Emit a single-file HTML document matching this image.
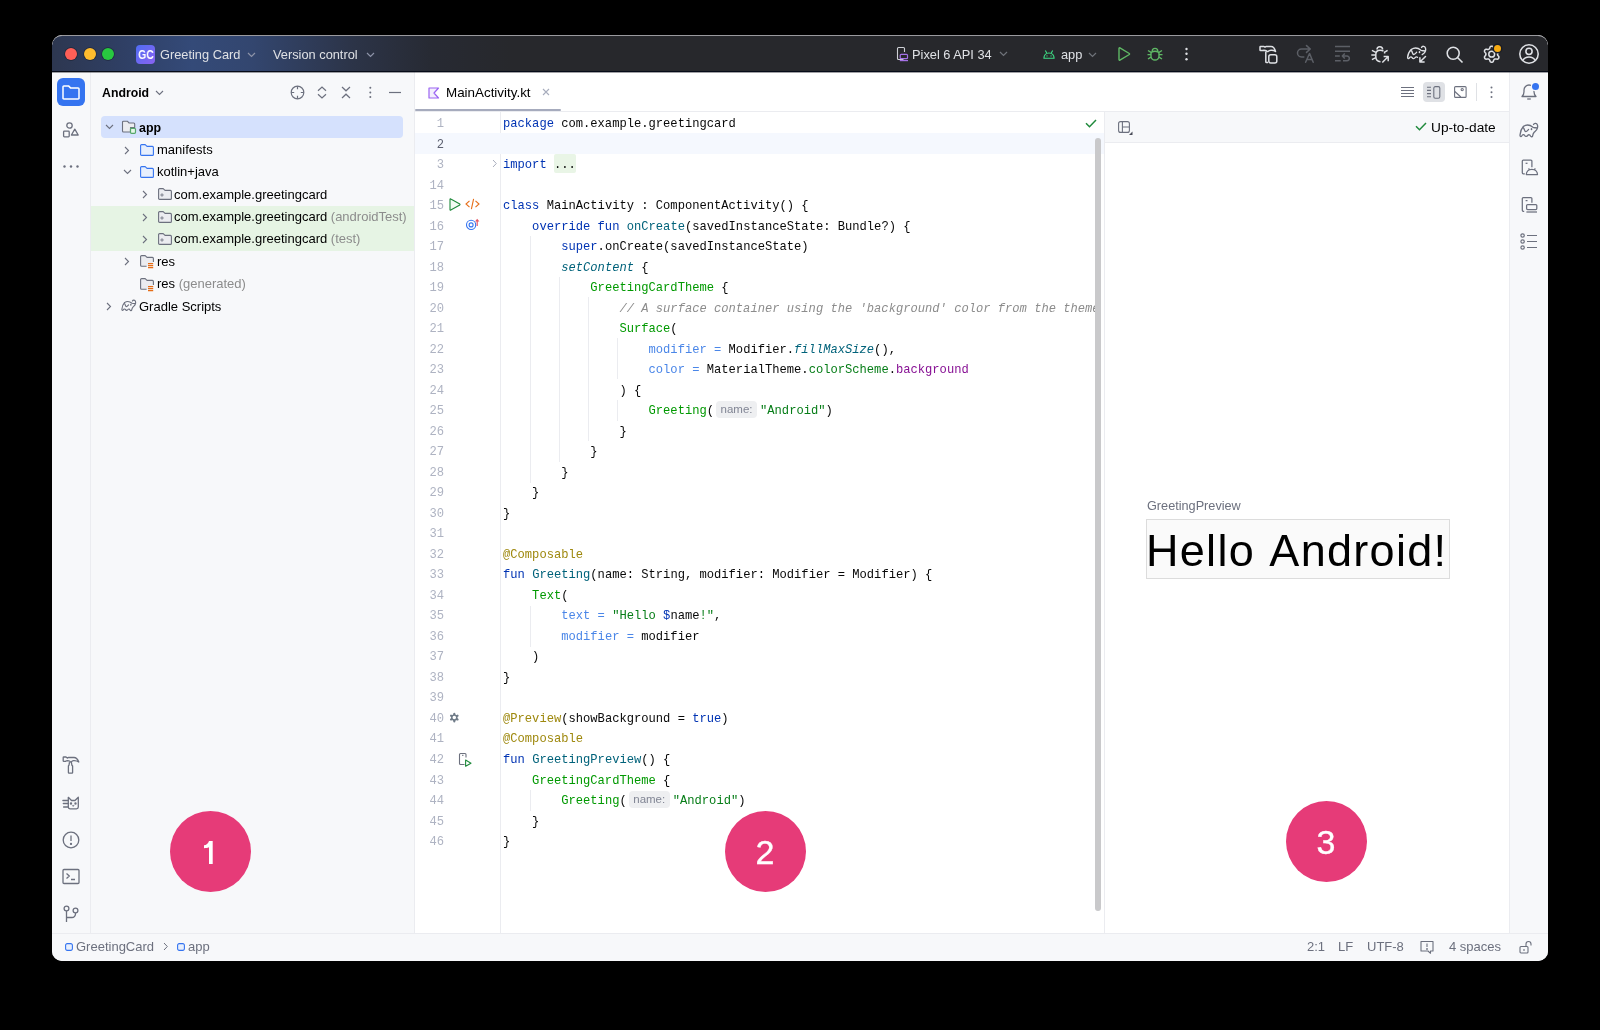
<!DOCTYPE html>
<html><head><meta charset="utf-8">
<style>
*{margin:0;padding:0;box-sizing:border-box}
html,body{width:1600px;height:1030px;background:#000;overflow:hidden;font-family:"Liberation Sans",sans-serif;color:#000}
#win{position:absolute;left:0;top:0;width:1600px;height:1030px;clip-path:inset(35px 52px 69px 52px round 10px);background:#f7f8fa}
.a{position:absolute}
div.a{will-change:transform}
svg{position:absolute;overflow:visible}
/* title bar */
#tb{left:52px;top:35px;width:1496px;height:37px;background:linear-gradient(90deg,#2d3750 0px,#2f3f64 70px,#344a78 140px,#33466f 200px,#2c3448 300px,#272a33 380px,#27282c 460px);border-top:1px solid #9a9a9e;border-bottom:1px solid #060b18;border-radius:10px 10px 0 0}
#tbg{display:none}
.tl{width:12px;height:12px;border-radius:50%;top:48px;box-shadow:0 0 0 .7px rgba(0,0,0,.35)}
.tt{color:#dfe1e5;font-size:12.8px;top:46.8px;line-height:16px;white-space:nowrap}
/* panels */
#strip{left:52px;top:72px;width:39px;height:861px;background:#f7f8fa;border-right:1px solid #ebecf0}
#proj{left:91px;top:72px;width:324px;height:861px;background:#f7f8fa;border-right:1px solid #ebecf0}
#edh{left:415px;top:72px;width:1095px;height:40px;background:#fff;border-bottom:1px solid #ebecf0}
#ed{left:415px;top:112px;width:689px;height:821px;background:#fff}
#gut{left:500px;top:112px;width:1px;height:821px;background:#ebecf0}
#split{left:1104px;top:112px;width:1px;height:821px;background:#ebecf0}
#pvh{left:1105px;top:112px;width:405px;height:31px;background:#f7f8fa;border-bottom:1px solid #ebecf0}
#pv{left:1105px;top:143px;width:405px;height:790px;background:#fff}
#rstrip{left:1509px;top:72px;width:39px;height:861px;background:#f7f8fa;border-left:1px solid #ebecf0}
#sb{left:52px;top:933px;width:1496px;height:28px;background:#f7f8fa;border-top:1px solid #ebecf0}
/* tree */
.tr{font-size:13px;line-height:16px;white-space:nowrap;color:#000}
.gr{color:#8c8c8c}
/* code */
#code{left:503px;top:113.8px;font-family:"Liberation Mono",monospace;font-size:12.13px;line-height:20.52px;white-space:pre;color:#080808}
#nums{left:415px;top:113.8px;width:29px;text-align:right;font-family:"Liberation Mono",monospace;font-size:12.13px;line-height:20.52px;white-space:pre;color:#aeb3c2}
.k{color:#0033b3}.s{color:#067d17}.f{color:#00627a}.fi{color:#00627a;font-style:italic}
.c{color:#8c8c8c;font-style:italic}.an{color:#9e880d}.na{color:#4a86e8}.cp{color:#009900}.pu{color:#871094}
.hint{display:inline-block;width:41px;height:16.5px;margin:0 3px 0 2px;background:#eeeff1;border-radius:4px;color:#818594;font-family:"Liberation Sans",sans-serif;font-size:11.5px;line-height:16.5px;text-align:center;vertical-align:1px}
.ig{width:1px;background:#ebecf0}
.circ{width:81px;height:81px;border-radius:50%;background:#e63b78;color:#fff;font-size:34px;text-align:center;line-height:83.5px;-webkit-text-stroke:.35px #fff;text-indent:-1px}
.st{font-size:13px;line-height:16px;color:#6c707e;top:939px;white-space:nowrap}
</style></head>
<body>
<div id="win">
  <!-- TITLE BAR -->
  <div id="tb" class="a"></div>
  <div id="tbg" class="a"></div>
  <div class="a tl" style="left:65px;background:#ff5f57"></div>
  <div class="a tl" style="left:83.5px;background:#febc2e"></div>
  <div class="a tl" style="left:102px;background:#28c840"></div>
  <div class="a" style="left:136px;top:44.5px;width:19px;height:19px;border-radius:4px;background:linear-gradient(135deg,#4f6df5,#8a63f0)"></div><div class="a" style="left:136px;top:44.5px;width:19px;height:19px;color:#fff;font-size:13.4px;font-weight:bold;line-height:20px;text-align:center;transform:scaleX(.78)">GC</div>
  <div class="a tt" style="left:160px">Greeting Card</div>
  <div class="a tt" style="left:273px">Version control</div>
  <div class="a tt" style="left:912px">Pixel 6 API 34</div>
  <div class="a tt" style="left:1061px">app</div>


  <!-- TITLE ICONS -->
  <svg style="left:246.5px;top:51.5px" width="9" height="6" viewBox="0 0 9 6"><path d="M1 1l3.5 3.5L8 1" fill="none" stroke="#8d93a8" stroke-width="1.2"/></svg>
  <svg style="left:366px;top:51.5px" width="9" height="6" viewBox="0 0 9 6"><path d="M1 1l3.5 3.5L8 1" fill="none" stroke="#8d93a8" stroke-width="1.2"/></svg>
  <svg style="left:999px;top:51px" width="9" height="6" viewBox="0 0 9 6"><path d="M1 1l3.5 3.5L8 1" fill="none" stroke="#6f737a" stroke-width="1.2"/></svg>
  <svg style="left:1088px;top:52px" width="9" height="6" viewBox="0 0 9 6"><path d="M1 1l3.5 3.5L8 1" fill="none" stroke="#6f737a" stroke-width="1.2"/></svg>
  <!-- device icon -->
  <svg style="left:896px;top:47px" width="13" height="15" viewBox="0 0 13 15"><path d="M7.5 12.5H2.5a1 1 0 0 1-1-1V1.5a1 1 0 0 1 1-1h5a1 1 0 0 1 1 1V5" fill="none" stroke="#ced0d6" stroke-width="1.1"/><rect x="4.2" y="7.3" width="7.3" height="4.4" rx="1" fill="none" stroke="#a571e6" stroke-width="1.2"/><path d="M3.8 13.6h8.2" stroke="#a571e6" stroke-width="1.2"/></svg>
  <!-- android head -->
  <svg style="left:1042.5px;top:49.5px" width="12" height="9" viewBox="0 0.5 13 10.5" preserveAspectRatio="none"><path d="M1 10.2C1 6.5 3.4 4 6.5 4S12 6.5 12 10.2Z" fill="none" stroke="#3ddc84" stroke-width="1.3" stroke-linejoin="round"/><path d="M2.5 1l1.6 3M10.5 1L8.9 4" stroke="#3ddc84" stroke-width="1.2"/><circle cx="4.3" cy="7.4" r=".7" fill="#3ddc84"/><circle cx="8.7" cy="7.4" r=".7" fill="#3ddc84"/></svg>
  <!-- run -->
  <svg style="left:1117px;top:47px" width="14" height="14" viewBox="0 0 14 14"><path d="M2 1.4v11.2a.6.6 0 0 0 .9.5l9.4-5.6a.6.6 0 0 0 0-1L2.9.9A.6.6 0 0 0 2 1.4Z" fill="none" stroke="#5fb865" stroke-width="1.4" stroke-linejoin="round"/></svg>
  <!-- debug bug -->
  <svg style="left:1147px;top:47px" width="16" height="14" viewBox="0 0 16 14"><path d="M5.2 4.2a2.8 2.8 0 0 1 5.6 0" fill="none" stroke="#5fb865" stroke-width="1.4"/><path d="M4 6.5C4 4.9 5.5 4.2 8 4.2s4 .7 4 2.3v2.7c0 2.2-1.8 3.8-4 3.8s-4-1.6-4-3.8Z" fill="none" stroke="#5fb865" stroke-width="1.4"/><path d="M.5 7.6H4M12 7.6h3.5M1 3.5l3 1.8M15 3.5l-3 1.8M1 12l3-1.8M15 12l-3-1.8" stroke="#5fb865" stroke-width="1.4"/></svg>
  <!-- vertical dots -->
  <svg style="left:1184px;top:47px" width="5" height="14" viewBox="0 0 5 14"><circle cx="2.5" cy="2" r="1.2" fill="#dfe1e5"/><circle cx="2.5" cy="6.8" r="1.2" fill="#dfe1e5"/><circle cx="2.5" cy="12.3" r="1.2" fill="#dfe1e5"/></svg>
  <!-- hammer build -->
  <svg style="left:1254px;top:42px" width="28" height="24" viewBox="0 0 28 24" fill="none" stroke="#dfe1e5" stroke-width="1.5" stroke-linejoin="round"><path d="M6.5 4.5H10l1 .7 1-.7h5c2 0 3.8 2 4.5 5-1.3-1-2.9-1.3-4.5-1.2-1.5.1-2.5.7-3 1.2h-1c-.5-.7-1.5-1.3-3-1.3l-1.5.3h-2q-.5 0-.5-.5V5q0-.5.5-.5Z"/><path d="M11.8 9.5v10.3q0 .8.8.8H14"/><rect x="14.8" y="12.8" width="8" height="8.2" rx="2"/></svg>
  <!-- redo A -->
  <svg style="left:1291px;top:42px" width="28" height="24" viewBox="0 0 28 24" fill="none" stroke="#5c5f66" stroke-width="1.5" stroke-linejoin="round" stroke-linecap="round"><path d="M12.8 15h-2.3a4 4 0 0 1 0-8h8.8M15.5 3.6L19.3 7l-3.8 3.4"/><path d="M14.6 20.3l3.9-8.8h.1l3.6 8.8M15.8 17.6H21"/></svg>
  <!-- lines wrap -->
  <svg style="left:1329px;top:42px" width="28" height="24" viewBox="0 0 28 24" fill="none" stroke="#5c5f66" stroke-width="1.5" stroke-linejoin="round"><path d="M6 4.6h15M6 9.3h15M6 14h4.8M6 18.7h5.7"/><path d="M13.6 14H18a2.35 2.35 0 0 1 0 4.7h-4M15.8 11.4L13.3 14l2.5 2.6"/></svg>
  <!-- bug arrow -->
  <svg style="left:1366px;top:42px" width="28" height="24" viewBox="0 0 28 24" fill="none" stroke="#dfe1e5" stroke-width="1.5" stroke-linejoin="round"><path d="M11 7.6a2.8 2.8 0 0 1 5.6 0"/><path d="M17.5 9.3c-.8-.7-2-1-3.5-1-2.6 0-4.2 1.2-4.2 4.3v2.2c0 2.9 1.8 4.7 4.7 4.9"/><path d="M5.9 8.4l3.9 2M5.3 13h4.5M5.9 17.6l3.9-1.9M21.6 8.4l-3 1.8v1.2"/><path d="M16.3 20.5l5.7-5.7M17.6 14.6h4.6v4.6"/></svg>
  <!-- gradle sync -->
  <svg style="left:1403px;top:42px" width="28" height="24" viewBox="0 0 28 24" fill="none" stroke="#dfe1e5" stroke-width="1.35" stroke-linejoin="round" stroke-linecap="round"><path d="M8.3 7.5C11 5.6 15 5.8 18 8.3c1.5.5 3 .5 4.5.5.5-1.8 0-4.3-2-4.5-1-.1-1.7.5-2 1.2M22.5 8.8c-.4 1.8-1.8 3-3.3 3.8"/><path d="M14.5 15.3c-.8-.6-1.7-.5-2.4.4-.8 1.1-2.2 1.3-3-.1-.7-1-2-1-2.7.3-.7 1-1.9.8-1.8-.6.2-2.8 1.2-5.5 3.7-7.8"/><path d="M8.5 8.8c1 1.2 1 3.7 2.2 3.7 1.1 0 2.1-1.3 2.9-2.2"/><path d="M16.5 9.9v.6" stroke-width="1.6"/><path d="M22.5 14.5L17.2 19.8M16.9 15.8v4.3h4.2" stroke-width="1.5"/></svg>
  <!-- search -->
  <svg style="left:1446px;top:46px" width="18" height="17" viewBox="0 0 18 17" fill="none" stroke="#dfe1e5" stroke-width="1.55"><circle cx="7.2" cy="7.2" r="6"/><path d="M11.5 11.5l5 5"/></svg>
  <!-- gear -->
  <svg style="left:1478px;top:42px" width="28" height="24" viewBox="0 0 28 24" fill="none" stroke="#dfe1e5" stroke-width="1.5" stroke-linejoin="round"><path d="M19.45 12.20 L19.48 12.50 L19.56 12.82 L19.69 13.15 L19.89 13.52 L20.36 13.99 L20.80 14.51 L20.92 14.97 L20.93 15.42 L20.84 15.84 L20.67 16.22 L20.42 16.57 L20.10 16.85 L19.71 17.07 L19.25 17.20 L18.58 17.08 L17.94 16.91 L17.52 16.91 L17.16 16.96 L16.85 17.05 L16.57 17.18 L16.33 17.35 L16.09 17.58 L15.87 17.86 L15.66 18.22 L15.49 18.86 L15.25 19.51 L14.91 19.84 L14.53 20.07 L14.12 20.20 L13.70 20.25 L13.28 20.20 L12.87 20.07 L12.49 19.84 L12.15 19.51 L11.91 18.86 L11.74 18.22 L11.53 17.86 L11.31 17.58 L11.07 17.35 L10.83 17.18 L10.55 17.05 L10.24 16.96 L9.88 16.91 L9.46 16.91 L8.82 17.08 L8.15 17.20 L7.69 17.07 L7.30 16.85 L6.98 16.57 L6.73 16.22 L6.56 15.84 L6.47 15.42 L6.48 14.97 L6.60 14.51 L7.04 13.99 L7.51 13.52 L7.71 13.15 L7.84 12.82 L7.92 12.50 L7.95 12.20 L7.92 11.90 L7.84 11.58 L7.71 11.25 L7.51 10.88 L7.04 10.41 L6.60 9.89 L6.48 9.43 L6.47 8.98 L6.56 8.56 L6.73 8.18 L6.98 7.83 L7.30 7.55 L7.69 7.33 L8.15 7.20 L8.82 7.32 L9.46 7.49 L9.88 7.49 L10.24 7.44 L10.55 7.35 L10.82 7.22 L11.07 7.05 L11.31 6.82 L11.53 6.54 L11.74 6.18 L11.91 5.54 L12.15 4.89 L12.49 4.56 L12.87 4.33 L13.28 4.20 L13.70 4.15 L14.12 4.20 L14.53 4.33 L14.91 4.56 L15.25 4.89 L15.49 5.54 L15.66 6.18 L15.87 6.54 L16.09 6.82 L16.33 7.05 L16.57 7.22 L16.85 7.35 L17.16 7.44 L17.52 7.49 L17.94 7.49 L18.58 7.32 L19.25 7.20 L19.71 7.33 L20.10 7.55 L20.42 7.83 L20.67 8.18 L20.84 8.56 L20.93 8.98 L20.92 9.43 L20.80 9.89 L20.36 10.41 L19.89 10.88 L19.69 11.25 L19.56 11.58 L19.48 11.90Z"/><circle cx="13.7" cy="12.2" r="2.9"/></svg>
  <div class="a" style="left:1494.3px;top:44.5px;width:7px;height:7px;border-radius:50%;background:#f7ab12;box-shadow:0 0 0 1.5px #1a1d26"></div>
  <!-- profile -->
  <svg style="left:1519.3px;top:43.7px" width="20" height="20" viewBox="0 0 20 20" fill="none" stroke="#dfe1e5" stroke-width="1.55"><circle cx="10" cy="10" r="9.2"/><circle cx="10" cy="7.3" r="3.1"/><path d="M3.6 16.6c1.4-2.3 3.6-3.6 6.4-3.6s5 1.3 6.4 3.6"/></svg>

  <!-- PANELS -->
  <div id="strip" class="a"></div>
  <div id="proj" class="a"></div>
  <div id="edh" class="a"></div>
  <div id="ed" class="a"></div>
  <div id="gut" class="a"></div>
  <div id="split" class="a"></div>
  <div id="pvh" class="a"></div>
  <div id="pv" class="a"></div>
  <div id="rstrip" class="a"></div>
  <div id="sb" class="a"></div>

  <div class="a" style="left:52px;top:72px;width:1496px;height:1px;background:rgba(30,32,40,.42)"></div>
  <!-- left strip active button -->
  <div class="a" style="left:57px;top:78px;width:28px;height:28px;border-radius:6px;background:#3574f0"></div>

  <!-- PROJECT PANEL -->
  <div class="a tr" style="left:102px;top:85px;font-weight:bold;font-size:12.3px">Android</div>
  <div class="a" style="left:101px;top:116px;width:302px;height:22px;border-radius:4px;background:#d5e1fd"></div>
  <div class="a" style="left:91px;top:205.5px;width:323px;height:44.5px;background:#e6f4e4"></div>
  <div class="a tr" style="left:139px;top:119.5px;font-weight:bold;font-size:12.4px">app</div>
  <div class="a tr" style="left:157px;top:141.5px">manifests</div>
  <div class="a tr" style="left:157px;top:164px">kotlin+java</div>
  <div class="a tr" style="left:174px;top:186.5px">com.example.greetingcard</div>
  <div class="a tr" style="left:174px;top:209px">com.example.greetingcard <span class="gr">(androidTest)</span></div>
  <div class="a tr" style="left:174px;top:231px">com.example.greetingcard <span class="gr">(test)</span></div>
  <div class="a tr" style="left:157px;top:253.5px">res</div>
  <div class="a tr" style="left:157px;top:276px">res <span class="gr">(generated)</span></div>
  <div class="a tr" style="left:139px;top:298.5px">Gradle Scripts</div>


  <!-- LEFT STRIP ICONS -->
  <svg style="left:62px;top:84.5px" width="18" height="15" viewBox="0 0 18 15" fill="none" stroke="#fff" stroke-width="1.5" stroke-linejoin="round"><path d="M1 1.8a.9.9 0 0 1 .9-.9h4.6l2 2h7.6a.9.9 0 0 1 .9.9v9.4a.9.9 0 0 1-.9.9H1.9a.9.9 0 0 1-.9-.9Z"/></svg>
  <svg style="left:62px;top:121px" width="18" height="17" viewBox="0 0 18 17" fill="none" stroke="#6c707e" stroke-width="1.3" stroke-linejoin="round"><circle cx="7.5" cy="4.5" r="2.7"/><rect x="1.6" y="10.2" width="5.6" height="5.6" rx=".8"/><path d="M12.8 8.2l3.4 5.8H9.4Z"/></svg>
  <svg style="left:62px;top:164px" width="18" height="5" viewBox="0 0 18 5"><circle cx="2.5" cy="2.5" r="1.2" fill="#6c707e"/><circle cx="9" cy="2.5" r="1.2" fill="#6c707e"/><circle cx="15.5" cy="2.5" r="1.2" fill="#6c707e"/></svg>
  <!-- hammer -->
  <svg style="left:58px;top:752px" width="28" height="24" viewBox="0 0 28 24" fill="none" stroke="#6c707e" stroke-width="1.3" stroke-linejoin="round"><path d="M5.8 5H8l1.3 1.1 1-.6H16c2 0 3.8 2 4.8 4.5-1.3-1-3.3-1.5-5.3-1.4-1 .1-1.7.7-2.2 1.4h-.6c-.5-.6-1.7-1.4-2.9-1.4l-1.3.2-1 .6H5.8q-.6 0-.6-.6V5.6q0-.6.6-.6Z"/><path d="M11.5 10.2L11 13.2l-.6.8v6.6q0 .6.6.6h3q.6 0 .6-.6V14l-.7-.8-.6-3"/></svg>
  <!-- cat logcat -->
  <svg style="left:58px;top:790px" width="28" height="24" viewBox="0 0 28 24" fill="none" stroke="#6c707e" stroke-width="1.3" stroke-linejoin="round" stroke-linecap="round"><path d="M10.3 7.3l3.2 3.2H17l3.3-3.2V17q0 1.8-1.8 1.8H12q-1.7 0-1.7-1.8Z"/><path d="M4.9 10.5H10M5.3 13.5H10M5.6 17H10"/><circle cx="13" cy="13.5" r=".55" fill="#6c707e"/><circle cx="17.5" cy="13.5" r=".55" fill="#6c707e"/><path d="M14.7 15.4h1.4l-.7.9Z" fill="#6c707e" stroke-width=".6"/></svg>
  <!-- problems -->
  <svg style="left:62px;top:831px" width="18" height="18" viewBox="0 0 18 18" fill="none" stroke="#6c707e" stroke-width="1.3"><circle cx="9" cy="9" r="7.8"/><path d="M9 4.5v5.5"/><circle cx="9" cy="12.9" r=".5" fill="#6c707e"/></svg>
  <!-- terminal -->
  <svg style="left:62px;top:868px" width="18" height="17" viewBox="0 0 18 17" fill="none" stroke="#6c707e" stroke-width="1.3" stroke-linejoin="round"><rect x="1" y="1.5" width="16" height="14" rx="1"/><path d="M4.5 5.5l2.8 2.5-2.8 2.5M9 11.5h4"/></svg>
  <!-- git -->
  <svg style="left:62px;top:905px" width="18" height="18" viewBox="0 0 18 18" fill="none" stroke="#6c707e" stroke-width="1.3"><circle cx="4.5" cy="3.5" r="2.4"/><circle cx="13.5" cy="5.5" r="2.4"/><path d="M4.5 6v11M4.5 12.5h5.5a3.5 3.5 0 0 0 3.5-3.5V8"/></svg>

  <!-- PROJECT PANEL ICONS -->
  <svg style="left:155px;top:89.5px" width="9" height="6" viewBox="0 0 9 6"><path d="M1 1l3.5 3.5L8 1" fill="none" stroke="#6c707e" stroke-width="1.1"/></svg>
  <svg style="left:290px;top:85px" width="15" height="15" viewBox="0 0 15 15" fill="none" stroke="#6c707e" stroke-width="1.2"><circle cx="7.5" cy="7.5" r="6.3"/><path d="M7.5 1.2v3M7.5 10.8v3M1.2 7.5h3M10.8 7.5h3"/></svg>
  <svg style="left:317px;top:86px" width="10" height="13" viewBox="0 0 10 13" fill="none" stroke="#6c707e" stroke-width="1.2"><path d="M1 4.8L5 1l4 3.8M1 8.2l4 3.8 4-3.8"/></svg>
  <svg style="left:341px;top:86px" width="10" height="13" viewBox="0 0 10 13" fill="none" stroke="#6c707e" stroke-width="1.2"><path d="M1 1l4 3.8L9 1M1 12l4-3.8L9 12"/></svg>
  <svg style="left:368px;top:86px" width="5" height="13" viewBox="0 0 5 13"><circle cx="2.3" cy="1.7" r="1" fill="#6c707e"/><circle cx="2.3" cy="6.4" r="1" fill="#6c707e"/><circle cx="2.3" cy="11" r="1" fill="#6c707e"/></svg>
  <svg style="left:389px;top:91px" width="12" height="3" viewBox="0 0 12 3"><path d="M0 1.5h12" stroke="#6c707e" stroke-width="1.2"/></svg>
  <!-- tree chevrons -->
  <svg style="left:105px;top:124px" width="9" height="6" viewBox="0 0 9 6"><path d="M1 1l3.5 3.5L8 1" fill="none" stroke="#6c707e" stroke-width="1.1"/></svg>
  <svg style="left:124px;top:146px" width="6" height="9" viewBox="0 0 6 9"><path d="M1 1l3.5 3.5L1 8" fill="none" stroke="#6c707e" stroke-width="1.1"/></svg>
  <svg style="left:123px;top:169px" width="9" height="6" viewBox="0 0 9 6"><path d="M1 1l3.5 3.5L8 1" fill="none" stroke="#6c707e" stroke-width="1.1"/></svg>
  <svg style="left:142px;top:190px" width="6" height="9" viewBox="0 0 6 9"><path d="M1 1l3.5 3.5L1 8" fill="none" stroke="#6c707e" stroke-width="1.1"/></svg>
  <svg style="left:142px;top:212.5px" width="6" height="9" viewBox="0 0 6 9"><path d="M1 1l3.5 3.5L1 8" fill="none" stroke="#6c707e" stroke-width="1.1"/></svg>
  <svg style="left:142px;top:235px" width="6" height="9" viewBox="0 0 6 9"><path d="M1 1l3.5 3.5L1 8" fill="none" stroke="#6c707e" stroke-width="1.1"/></svg>
  <svg style="left:124px;top:257px" width="6" height="9" viewBox="0 0 6 9"><path d="M1 1l3.5 3.5L1 8" fill="none" stroke="#6c707e" stroke-width="1.1"/></svg>
  <svg style="left:106px;top:302px" width="6" height="9" viewBox="0 0 6 9"><path d="M1 1l3.5 3.5L1 8" fill="none" stroke="#6c707e" stroke-width="1.1"/></svg>
  <!-- app module folder -->
  <svg style="left:121px;top:120px" width="16" height="17" viewBox="0 0 16 17"><path d="M1.5 2.2a1 1 0 0 1 1-1h3.8l1.8 1.8h4.6a1 1 0 0 1 1 1v3.5H9.5v4.5H2.5a1 1 0 0 1-1-1Z" fill="#ebecf0" stroke="#6c707e" stroke-width="1.1" stroke-linejoin="round"/><rect x="9.5" y="8.3" width="5" height="5" rx="1" fill="#e6f7e9" stroke="#55a76a" stroke-width="1.2"/></svg>
  <!-- blue folders -->
  <svg style="left:139.5px;top:143.5px" width="14" height="12" viewBox="0 0 14 12"><path d="M.6 1.6a1 1 0 0 1 1-1h3.6l1.8 1.8h5.4a1 1 0 0 1 1 1v7a1 1 0 0 1-1 1h-10.8a1 1 0 0 1-1-1Z" fill="#e7effd" stroke="#3574f0" stroke-width="1.1" stroke-linejoin="round"/></svg>
  <svg style="left:139.5px;top:166px" width="14" height="12" viewBox="0 0 14 12"><path d="M.6 1.6a1 1 0 0 1 1-1h3.6l1.8 1.8h5.4a1 1 0 0 1 1 1v7a1 1 0 0 1-1 1h-10.8a1 1 0 0 1-1-1Z" fill="#e7effd" stroke="#3574f0" stroke-width="1.1" stroke-linejoin="round"/></svg>
  <!-- package folders -->
  <svg style="left:157.5px;top:188px" width="14" height="12" viewBox="0 0 14 12"><path d="M.6 1.6a1 1 0 0 1 1-1h3.6l1.8 1.8h5.4a1 1 0 0 1 1 1v7a1 1 0 0 1-1 1h-10.8a1 1 0 0 1-1-1Z" fill="#ebecf0" stroke="#6c707e" stroke-width="1.1" stroke-linejoin="round"/><circle cx="4" cy="7" r="1.1" fill="none" stroke="#6c707e" stroke-width=".9"/></svg>
  <svg style="left:157.5px;top:210.5px" width="14" height="12" viewBox="0 0 14 12"><path d="M.6 1.6a1 1 0 0 1 1-1h3.6l1.8 1.8h5.4a1 1 0 0 1 1 1v7a1 1 0 0 1-1 1h-10.8a1 1 0 0 1-1-1Z" fill="#ebecf0" stroke="#6c707e" stroke-width="1.1" stroke-linejoin="round"/><circle cx="4" cy="7" r="1.1" fill="none" stroke="#6c707e" stroke-width=".9"/></svg>
  <svg style="left:157.5px;top:233px" width="14" height="12" viewBox="0 0 14 12"><path d="M.6 1.6a1 1 0 0 1 1-1h3.6l1.8 1.8h5.4a1 1 0 0 1 1 1v7a1 1 0 0 1-1 1h-10.8a1 1 0 0 1-1-1Z" fill="#ebecf0" stroke="#6c707e" stroke-width="1.1" stroke-linejoin="round"/><circle cx="4" cy="7" r="1.1" fill="none" stroke="#6c707e" stroke-width=".9"/></svg>
  <!-- res folders -->
  <svg style="left:139.5px;top:255px" width="15" height="14" viewBox="0 0 15 14"><path d="M6.6 11.3H1.6a1 1 0 0 1-1-1V1.6a1 1 0 0 1 1-1h3.6l1.8 1.8h5.4a1 1 0 0 1 1 1V7" fill="#ebecf0" stroke="#6c707e" stroke-width="1.1" stroke-linejoin="round"/><path d="M8 8.6h5.2M8 10.6h5.2M8 12.6h5.2" stroke="#e66d17" stroke-width="1.1"/></svg>
  <svg style="left:139.5px;top:277.5px" width="15" height="14" viewBox="0 0 15 14"><path d="M6.6 11.3H1.6a1 1 0 0 1-1-1V1.6a1 1 0 0 1 1-1h3.6l1.8 1.8h5.4a1 1 0 0 1 1 1V7" fill="#ebecf0" stroke="#6c707e" stroke-width="1.1" stroke-linejoin="round"/><path d="M8 8.6h5.2M8 10.6h5.2M8 12.6h5.2" stroke="#e66d17" stroke-width="1.1"/></svg>
  <!-- gradle -->
  <svg style="left:117.9px;top:296.4px" width="21.8" height="18.7" viewBox="0 0 28 24" fill="none" stroke="#6c707e" stroke-width="1.45" stroke-linejoin="round" stroke-linecap="round"><path d="M8.3 8.5C11 6.6 15 6.8 18 9.3c1.5.5 3 .5 4.5.5.5-1.8 0-4.3-2-4.5-1-.1-1.7.5-2 1.2M22.5 9.8c-.5 2.2-2 3.2-3.3 4.4-1.2 1.3-1.4 2.8-1.7 4.1-.3.7-1.5.7-2-.3-.5-1.2-1.7-1.7-2.7-.7-.8 1.2-2.3 1.7-3.1.2-.7-1.2-2.2-1.2-2.9.3-.8 1.2-2 .7-1.8-.8.3-3 1-6 3.3-8.5"/><path d="M8.5 9.8c1 1.2 1 3.9 2.2 3.9 1.1 0 2.1-1.4 2.9-2.3"/><path d="M16.5 10.9v.6" stroke-width="1.8"/></svg>

  <!-- EDITOR HEADER -->
  <div class="a tr" style="left:446px;top:84.5px;font-size:13.4px">MainActivity.kt</div>
  <div class="a" style="left:415px;top:109px;width:146px;height:2px;background:#a6abbd;border-radius:1px"></div>

  <!-- EDITOR -->
  <div class="a" style="left:415px;top:133px;width:689px;height:20.5px;background:#f5f8fe"></div>
  <div id="nums" class="a">1
<span style="color:#5e6272">2</span>
3
14
15
16
17
18
19
20
21
22
23
24
25
26
27
28
29
30
31
32
33
34
35
36
37
38
39
40
41
42
43
44
45
46</div>
  <div class="a" style="left:554px;top:154px;width:21.5px;height:19px;background:#e9f5e6;border-radius:2px"></div>
  <!-- indent guides -->
  <div class="a ig" style="left:530px;top:235.7px;height:246.5px"></div>
  <div class="a ig" style="left:559px;top:276.8px;height:184.9px"></div>
  <div class="a ig" style="left:588px;top:297.3px;height:143.8px"></div>
  <div class="a ig" style="left:617px;top:338.4px;height:41px"></div>
  <div class="a ig" style="left:617px;top:400px;height:20.5px"></div>
  <div class="a ig" style="left:530px;top:605.5px;height:41px"></div>
  <div class="a ig" style="left:530px;top:790.3px;height:20.5px"></div>
  <div id="code" class="a"><span class="k">package</span> com.example.greetingcard

<span class="k">import</span> ...

<span class="k">class</span> MainActivity : ComponentActivity() {
    <span class="k">override fun</span> <span class="f">onCreate</span>(savedInstanceState: Bundle?) {
        <span class="k">super</span>.onCreate(savedInstanceState)
        <span class="fi">setContent</span> {
            <span class="cp">GreetingCardTheme</span> {
                <span class="c">// A surface container using the 'background' color from the theme</span>
                <span class="cp">Surface</span>(
                    <span class="na">modifier =</span> Modifier.<span class="fi">fillMaxSize</span>(),
                    <span class="na">color =</span> MaterialTheme.<span class="s">colorScheme</span>.<span class="pu">background</span>
                ) {
                    <span class="cp">Greeting</span>(<span class="hint">name:</span><span class="s">"Android"</span>)
                }
            }
        }
    }
}

<span class="an">@Composable</span>
<span class="k">fun</span> <span class="f">Greeting</span>(name: String, modifier: Modifier = Modifier) {
    <span class="cp">Text</span>(
        <span class="na">text =</span> <span class="s">"Hello </span><span class="k">$</span>name<span class="s">!"</span>,
        <span class="na">modifier =</span> modifier
    )
}

<span class="an">@Preview</span>(showBackground = <span class="k">true</span>)
<span class="an">@Composable</span>
<span class="k">fun</span> <span class="f">GreetingPreview</span>() {
    <span class="cp">GreetingCardTheme</span> {
        <span class="cp">Greeting</span>(<span class="hint">name:</span><span class="s">"Android"</span>)
    }
}</div>
  <!-- scrollbar -->
  <div class="a" style="left:1095px;top:138px;width:6px;height:773px;border-radius:3px;background:#c9c9cb"></div>

  <!-- PREVIEW -->
  <div class="a tr" style="left:1431px;top:119.5px;font-size:13.7px">Up-to-date</div>
  <div class="a" style="left:1147px;top:498px;font-size:12.7px;line-height:16px;color:#6c707e">GreetingPreview</div>
  <div class="a" style="left:1146px;top:519px;width:304px;height:60px;background:#fafafa;border:1px solid #dcdcdc"></div>
  <div class="a" style="left:1146px;top:524.2px;font-size:45px;line-height:54px;color:#000;white-space:nowrap;letter-spacing:1.3px;word-spacing:3px">Hello Android!</div>

  <!-- STATUS BAR -->
  <div class="a st" style="left:76.3px">GreetingCard</div>
  <div class="a st" style="left:187.6px">app</div>
  <div class="a st" style="left:1307px">2:1</div>
  <div class="a st" style="left:1338px">LF</div>
  <div class="a st" style="left:1367px">UTF-8</div>
  <div class="a st" style="left:1449px">4 spaces</div>


  <!-- kotlin icon -->
  <svg style="left:427.5px;top:86.5px" width="12" height="12" viewBox="0 0 12 12"><path d="M1 1h9.5L6 6l4.5 5H1Z" fill="#f3effd" stroke="#9b64f2" stroke-width="1.2" stroke-linejoin="round"/></svg>
  <svg style="left:541.5px;top:88px" width="8" height="8" viewBox="0 0 8 8"><path d="M1 1l6 6M7 1L1 7" stroke="#a8adbd" stroke-width="1.1"/></svg>
  <!-- editor toolbar -->
  <svg style="left:1401px;top:86px" width="13" height="12" viewBox="0 0 13 12"><path d="M0 1.5h13M0 4.5h13M0 7.5h13M0 10.5h13" stroke="#6c707e" stroke-width="1.1"/></svg>
  <div class="a" style="left:1423px;top:82px;width:22px;height:20px;border-radius:4px;background:#dfe1e5"></div>
  <svg style="left:1427px;top:86px" width="14" height="13" viewBox="0 0 14 13"><path d="M0 1.2h4M0 4.4h4M0 7.6h4M0 10.8h4" stroke="#6c707e" stroke-width="1.1"/><rect x="6.8" y=".6" width="6" height="11.6" rx="1.5" fill="none" stroke="#6c707e" stroke-width="1.1"/></svg>
  <svg style="left:1454px;top:86px" width="13" height="12" viewBox="0 0 13 12" fill="none" stroke="#6c707e" stroke-width="1.1"><rect x=".6" y=".6" width="11.5" height="10.8" rx="1"/><circle cx="8.2" cy="3.6" r="1.1"/><path d="M.8 5.5l6 5.5"/></svg>
  <div class="a" style="left:1476px;top:83px;width:1px;height:18px;background:#dfe1e5"></div>
  <svg style="left:1489px;top:86px" width="5" height="13" viewBox="0 0 5 13"><circle cx="2.5" cy="1.5" r="1" fill="#6c707e"/><circle cx="2.5" cy="6.3" r="1" fill="#6c707e"/><circle cx="2.5" cy="11" r="1" fill="#6c707e"/></svg>
  <!-- inspections check -->
  <svg style="left:1085px;top:119px" width="12" height="9" viewBox="0 0 12 9"><path d="M1 4.2l3.5 3.5L11 1" fill="none" stroke="#208a3c" stroke-width="1.5"/></svg>
  <!-- gutter icons -->
  <svg style="left:449px;top:197.5px" width="12" height="13" viewBox="0 0 12 13"><path d="M1 1.3v10.4a.5.5 0 0 0 .8.4l9-5.2a.5.5 0 0 0 0-.8l-9-5.2A.5.5 0 0 0 1 1.3Z" fill="#f2fcf3" stroke="#208a3c" stroke-width="1.1" stroke-linejoin="round"/></svg>
  <svg style="left:464.5px;top:198px" width="15" height="12" viewBox="0 0 15 12" fill="none" stroke="#e66d17" stroke-width="1.1"><path d="M4.5 2.8L1 6l3.5 3.2M10.5 2.8L14 6l-3.5 3.2M8.6.8L6.4 11.2"/></svg>
  <svg style="left:466px;top:218px" width="14" height="13" viewBox="0 0 14 13"><circle cx="5.1" cy="6.9" r="4.6" fill="none" stroke="#3574f0" stroke-width="1.1"/><circle cx="5.1" cy="6.9" r="2" fill="none" stroke="#3574f0" stroke-width="1.1"/><path d="M11.2 8V2" stroke="#e55765" stroke-width="1.2"/><path d="M9 3.4l2.2-2.6 2.2 2.6Z" fill="#e55765"/></svg>
  <svg style="left:446px;top:708px" width="18" height="20" viewBox="0 0 18 20"><path fill-rule="evenodd" fill="#6f7b88" d="M11.50 9.60 L11.51 9.77 L11.55 9.94 L11.63 10.13 L11.75 10.33 L12.16 10.64 L12.55 10.98 L12.62 11.26 L12.62 11.52 L12.56 11.77 L12.46 12.00 L12.31 12.20 L12.12 12.38 L11.90 12.51 L11.62 12.59 L11.13 12.43 L10.66 12.22 L10.42 12.22 L10.22 12.25 L10.05 12.30 L9.90 12.37 L9.76 12.47 L9.63 12.59 L9.51 12.75 L9.39 12.96 L9.34 13.46 L9.23 13.97 L9.02 14.17 L8.79 14.30 L8.55 14.38 L8.30 14.40 L8.05 14.38 L7.81 14.30 L7.58 14.17 L7.37 13.97 L7.26 13.46 L7.21 12.96 L7.09 12.75 L6.97 12.59 L6.84 12.47 L6.70 12.37 L6.55 12.30 L6.38 12.25 L6.18 12.22 L5.94 12.22 L5.47 12.43 L4.98 12.59 L4.70 12.51 L4.48 12.38 L4.29 12.20 L4.14 12.00 L4.04 11.77 L3.98 11.52 L3.98 11.26 L4.05 10.98 L4.44 10.64 L4.85 10.33 L4.97 10.13 L5.05 9.94 L5.09 9.77 L5.10 9.60 L5.09 9.43 L5.05 9.26 L4.97 9.07 L4.85 8.87 L4.44 8.56 L4.05 8.22 L3.98 7.94 L3.98 7.68 L4.04 7.43 L4.14 7.20 L4.29 7.00 L4.48 6.82 L4.70 6.69 L4.98 6.61 L5.47 6.77 L5.94 6.98 L6.18 6.98 L6.38 6.95 L6.55 6.90 L6.70 6.83 L6.84 6.73 L6.97 6.61 L7.09 6.45 L7.21 6.24 L7.26 5.74 L7.37 5.23 L7.58 5.03 L7.81 4.90 L8.05 4.82 L8.30 4.80 L8.55 4.82 L8.79 4.90 L9.02 5.03 L9.23 5.23 L9.34 5.74 L9.39 6.24 L9.51 6.45 L9.63 6.61 L9.76 6.73 L9.90 6.83 L10.05 6.90 L10.22 6.95 L10.42 6.98 L10.66 6.98 L11.13 6.77 L11.62 6.61 L11.90 6.69 L12.12 6.82 L12.31 7.00 L12.46 7.20 L12.56 7.43 L12.62 7.68 L12.62 7.94 L12.55 8.22 L12.16 8.56 L11.75 8.87 L11.63 9.07 L11.55 9.26 L11.51 9.43Z M10.05 9.6 A1.75 1.75 0 1 0 6.55 9.6 A1.75 1.75 0 1 0 10.05 9.6Z"/></svg>
  <svg style="left:459px;top:752.5px" width="13" height="14" viewBox="0 0 13 14"><path d="M5.5 11.5H1.5a1 1 0 0 1-1-1V1.5a1 1 0 0 1 1-1h4.5a1 1 0 0 1 1 1v3" fill="none" stroke="#6c707e" stroke-width="1.1"/><path d="M3 2.3h1.5" stroke="#6c707e" stroke-width="1"/><path d="M6.6 7v6.3l5.4-3.15Z" fill="#fff" stroke="#208a3c" stroke-width="1.1" stroke-linejoin="round"/></svg>
  <!-- fold chevron -->
  <svg style="left:491.5px;top:159px" width="6" height="9" viewBox="0 0 6 9"><path d="M1 1l3.3 3.5L1 8" fill="none" stroke="#a8adbd" stroke-width="1"/></svg>
  <!-- preview toolbar -->
  <svg style="left:1117.8px;top:121px" width="15" height="14" viewBox="0 0 15 14"><rect x=".6" y=".6" width="10.8" height="10.8" rx="2" fill="none" stroke="#6c707e" stroke-width="1.1"/><path d="M4.4.6v10.8M4.4 6h7" stroke="#6c707e" stroke-width="1.1"/><path d="M14.5 10.5v3.5H11Z" fill="#494b57"/></svg>
  <svg style="left:1415px;top:122px" width="12" height="9" viewBox="0 0 12 9"><path d="M1 4.2l3.5 3.5L11 1" fill="none" stroke="#208a3c" stroke-width="1.5"/></svg>
  <!-- RIGHT STRIP ICONS -->
  <svg style="left:1520px;top:82.3px" width="18" height="19" viewBox="0 0 18 19" fill="none" stroke="#6c707e" stroke-width="1.3" stroke-linejoin="round"><path d="M2 14.5h14c-1.3-1.3-2-2.7-2-4.8V8a5 5 0 0 0-10 0v1.7c0 2.1-.7 3.5-2 4.8Z"/><path d="M7.2 17h3.6"/></svg>
  <div class="a" style="left:1531.5px;top:82.5px;width:7px;height:7px;border-radius:50%;background:#3574f0;box-shadow:0 0 0 1.3px #f7f8fa"></div>
  <svg style="left:1515px;top:118px" width="28" height="24" viewBox="0 0 28 24" fill="none" stroke="#6c707e" stroke-width="1.3" stroke-linejoin="round" stroke-linecap="round"><path d="M8.3 8.5C11 6.6 15 6.8 18 9.3c1.5.5 3 .5 4.5.5.5-1.8 0-4.3-2-4.5-1-.1-1.7.5-2 1.2M22.5 9.8c-.5 2.2-2 3.2-3.3 4.4-1.2 1.3-1.4 2.8-1.7 4.1-.3.7-1.5.7-2-.3-.5-1.2-1.7-1.7-2.7-.7-.8 1.2-2.3 1.7-3.1.2-.7-1.2-2.2-1.2-2.9.3-.8 1.2-2 .7-1.8-.8.3-3 1-6 3.3-8.5"/><path d="M8.5 9.8c1 1.2 1 3.9 2.2 3.9 1.1 0 2.1-1.4 2.9-2.3"/><path d="M16.5 10.9v.6" stroke-width="1.6"/></svg>
  <svg style="left:1515px;top:155px" width="28" height="60" viewBox="0 0 28 60" fill="none" stroke="#6c707e" stroke-width="1.25" stroke-linejoin="round"><path d="M9.8 18.8H8.3q-1 0-1-1V6q0-1 1-1h7.6q1 0 1 1v6.3"/><path d="M10.6 8.3h1.9"/><path d="M11.3 19.6c0-3.2 2.5-5.3 5.6-5.3s5.6 2.1 5.6 5.3Z"/><path d="M13.6 13.4l.9 1.6M20.3 13.4l-.9 1.6"/><path d="M9.2 56.3H8.3q-1 0-1-1V43.5q0-1 1-1h7.6q1 0 1 1v4.3"/><path d="M10.6 45.6h1.9"/><rect x="11.6" y="49.5" width="10.2" height="5" rx="1"/><path d="M11.4 57h10.6"/></svg>
  
  <svg style="left:1520px;top:233px" width="18" height="17" viewBox="0 0 18 17" fill="none" stroke="#6c707e" stroke-width="1.2"><circle cx="2.6" cy="2.5" r="1.7"/><circle cx="2.6" cy="8.5" r="1.7"/><circle cx="2.6" cy="14.5" r="1.7"/><path d="M7 2.5h10M7 8.5h10M7 14.5h10"/></svg>
  <!-- STATUS BAR ICONS -->
  <svg style="left:65px;top:943px" width="8" height="8" viewBox="0 0 8 8"><rect x=".6" y=".6" width="6.8" height="6.8" rx="1.6" fill="#e7effd" stroke="#3574f0" stroke-width="1.1"/></svg>
  <svg style="left:176.5px;top:943px" width="8" height="8" viewBox="0 0 8 8"><rect x=".6" y=".6" width="6.8" height="6.8" rx="1.6" fill="#e7effd" stroke="#3574f0" stroke-width="1.1"/></svg>
  <svg style="left:162.5px;top:942px" width="6" height="9" viewBox="0 0 6 9"><path d="M1 1l3.3 3.5L1 8" fill="none" stroke="#6c707e" stroke-width="1"/></svg>
  <svg style="left:1419.5px;top:940px" width="14" height="14" viewBox="0 0 14 14" fill="none" stroke="#6c707e" stroke-width="1.1" stroke-linejoin="round"><path d="M1 1.5h12V11h-2.5v2.3L8 11H1Z"/><path d="M7 3.5v3.6"/><circle cx="7" cy="9" r=".35" fill="#6c707e"/></svg>
  <svg style="left:1518.5px;top:940px" width="14" height="14" viewBox="0 0 14 14" fill="none" stroke="#6c707e" stroke-width="1.1" stroke-linejoin="round"><rect x="1" y="6.5" width="8" height="6.5" rx="1"/><path d="M7 6.5V4a2.5 2.5 0 0 1 5 0v1.5"/><path d="M5 9v2"/></svg>

  <!-- CIRCLES -->
  <div class="a circ" style="left:169.5px;top:811px"></div>
  <svg style="left:160px;top:800px" width="100" height="100" viewBox="0 0 100 100"><path d="M49 41H52.7V64H49V47.3C47.5 48 45.8 48.2 44 48.2V45.3C46.3 45.1 48.2 43.6 49 41Z" fill="#fff"/></svg>
  <div class="a circ" style="left:724.5px;top:811px">2</div>
  <div class="a circ" style="left:1285.5px;top:801px">3</div>
</div>
</body></html>
